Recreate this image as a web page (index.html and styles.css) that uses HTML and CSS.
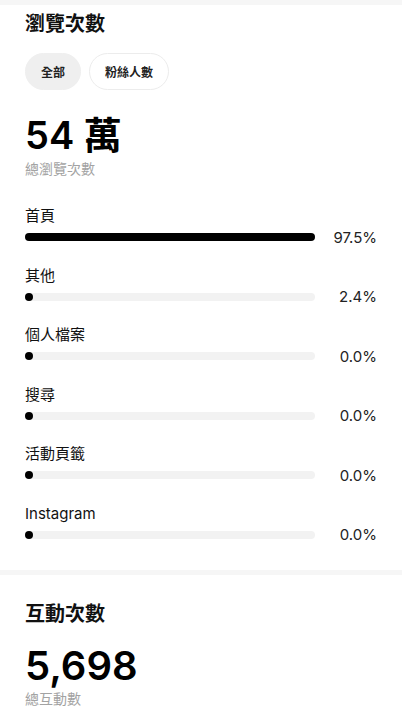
FILE: index.html
```html
<!DOCTYPE html>
<html lang="zh-Hant">

<head>
    <meta charset="UTF-8">
    <meta name="viewport" content="width=device-width, initial-scale=1.0">
    <title>洞察報告</title>
    <link rel="stylesheet" href="styles.css">
</head>

<body>
    <div class="divider"></div>

    <section class="panel panel-views">
        <h2 class="panel-title">瀏覽次數</h2>

        <div class="chips">
            <button type="button" class="chip chip-active">全部</button>
            <button type="button" class="chip">粉絲人數</button>
        </div>

        <div class="total">
            <div class="total-value">54 萬</div>
            <div class="total-label">總瀏覽次數</div>
        </div>

        <!-- bar widths are relative to the largest source -->
        <div class="sources">
            <div class="source">
                <div class="source-name">首頁</div>
                <div class="source-bar">
                    <div class="track"><div class="fill" style="width: 100%"></div></div>
                    <span class="source-pct">97.5%</span>
                </div>
            </div>
            <div class="source">
                <div class="source-name">其他</div>
                <div class="source-bar">
                    <div class="track"><div class="fill" style="width: 2.5%"></div></div>
                    <span class="source-pct">2.4%</span>
                </div>
            </div>
            <div class="source">
                <div class="source-name">個人檔案</div>
                <div class="source-bar">
                    <div class="track"><div class="fill" style="width: 0%"></div></div>
                    <span class="source-pct">0.0%</span>
                </div>
            </div>
            <div class="source">
                <div class="source-name">搜尋</div>
                <div class="source-bar">
                    <div class="track"><div class="fill" style="width: 0%"></div></div>
                    <span class="source-pct">0.0%</span>
                </div>
            </div>
            <div class="source">
                <div class="source-name">活動頁籤</div>
                <div class="source-bar">
                    <div class="track"><div class="fill" style="width: 0%"></div></div>
                    <span class="source-pct">0.0%</span>
                </div>
            </div>
            <div class="source">
                <div class="source-name">Instagram</div>
                <div class="source-bar">
                    <div class="track"><div class="fill" style="width: 0%"></div></div>
                    <span class="source-pct">0.0%</span>
                </div>
            </div>
        </div>
    </section>

    <div class="divider"></div>

    <section class="panel panel-interactions">
        <h2 class="panel-title">互動次數</h2>

        <div class="total">
            <div class="total-value total-value-lg">5,698</div>
            <div class="total-label">總互動數</div>
        </div>
    </section>
</body>

</html>
```

FILE: styles.css
```css
body {
    margin: 0;
    background: #fff;
    color: #111;
    font-family: Inter, "Noto Sans CJK TC", sans-serif;
}
.divider {
    height: 5px;
    background: #f6f6f6;
}
.panel {
    padding: 5px 25px 25px;
}
.panel-interactions {
    padding-top: 25px;
}
.panel-title {
    margin: 0;
    font-size: 20px;
    line-height: 28px;
    font-weight: 700;
    color: #111;
}
.chips {
    display: flex;
    gap: 8px;
    margin-top: 15px;
}
.chip {
    height: 37px;
    padding: 0 15px;
    border: 1px solid #ececec;
    border-radius: 19px;
    background: #fff;
    font-family: inherit;
    font-size: 12px;
    font-weight: 700;
    color: #222;
}
.chip-active {
    background: #efefef;
    border-color: #efefef;
}
.total {
    margin-top: 22px;
}
.panel-interactions .total {
    margin-top: 15px;
}
.total-value {
    font-size: 38px;
    line-height: 46px;
    font-weight: 600;
    color: #000;
}
.total-value-lg {
    font-size: 40px;
}
.total-label {
    margin-top: 1px;
    font-size: 14px;
    line-height: 20px;
    color: #a3a3a3;
}
.total-value-lg + .total-label {
    margin-top: 0;
}
.sources {
    margin-top: 27px;
    display: flex;
    flex-direction: column;
    gap: 18.5px;
}
.source-name {
    font-size: 15px;
    line-height: 20px;
    color: #111;
}
.source-bar {
    display: flex;
    align-items: center;
    height: 20px;
    margin-top: 1px;
}
.track {
    flex: 1;
    height: 8px;
    border-radius: 4px;
    background: #f2f2f2;
}
.fill {
    min-width: 8px;
    height: 100%;
    border-radius: 4px;
    background: #000;
}
.source-pct {
    width: 62px;
    text-align: right;
    font-size: 15px;
    color: #222;
}
```
